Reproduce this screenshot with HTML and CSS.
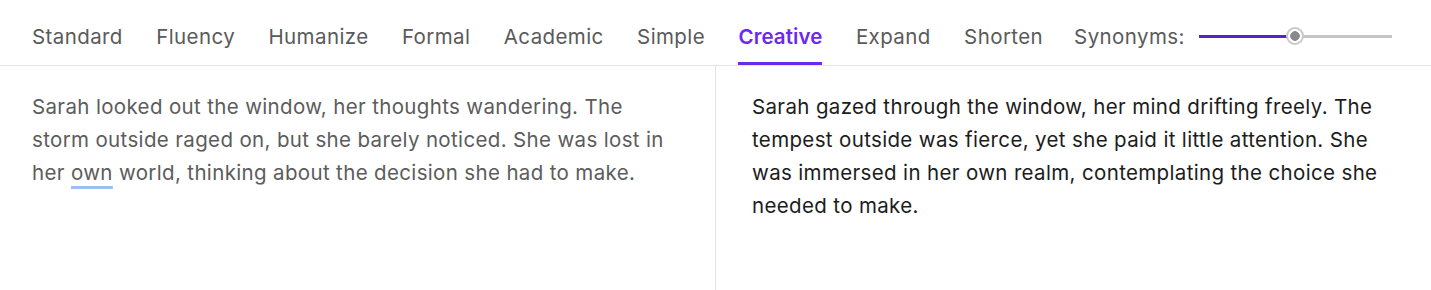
FILE: index.html
```html
<!DOCTYPE html>
<html>
<head>
  <meta charset="UTF-8">
  <meta name="viewport" content="width=device-width, initial-scale=1.0">
  <title>Paraphraser</title>
  <link rel="stylesheet" href="styles.css">
</head>
<body>
  <div class="toolbar">
    <div class="modes">
      <div class="mode">Standard</div>
      <div class="mode">Fluency</div>
      <div class="mode">Humanize</div>
      <div class="mode">Formal</div>
      <div class="mode">Academic</div>
      <div class="mode">Simple</div>
      <div class="mode active">Creative</div>
      <div class="mode">Expand</div>
      <div class="mode">Shorten</div>
    </div>
    <div class="synonyms">
      <span class="synonyms-label">Synonyms:</span>
      <div class="slider">
        <div class="slider-fill" style="width: 50%"></div>
        <div class="slider-thumb"></div>
        <div class="slider-rest"></div>
      </div>
    </div>
  </div>

  <div class="panes">
    <div class="pane input">
      <p>Sarah looked out the window, her thoughts wandering. The storm outside raged on, but she barely noticed. She was lost in her <span class="mark">own</span> world, thinking about the decision she had to make.</p>
    </div>
    <div class="pane output">
      <p>Sarah gazed through the window, her mind drifting freely. The tempest outside was fierce, yet she paid it little attention. She was immersed in her own realm, contemplating the choice she needed to make.</p>
    </div>
  </div>
</body>
</html>
```

FILE: styles.css
```css
body {
  margin: 0;
  font-family: Inter, "Noto Sans", sans-serif;
  background-color: #fff;
  color: #1f1f1f;
}

.toolbar {
  display: flex;
  align-items: stretch;
  height: 65px;
  padding: 0 32px;
  border-bottom: 1px solid #e3e3e3;
}

.modes {
  display: flex;
  gap: 33.4px;
}

.mode {
  display: flex;
  align-items: center;
  padding-top: 10px;
  font-size: 20.5px;
  letter-spacing: 0.4px;
  color: #5a5a5a;
  border-bottom: 3px solid transparent;
  cursor: pointer;
}

.mode.active {
  color: #6d28f0;
  font-weight: 600;
  letter-spacing: 0.1px;
  border-bottom-color: #6d28f0;
}

.synonyms {
  display: flex;
  align-items: center;
  gap: 14px;
  margin-left: 31px;
  padding-top: 10px;
  padding-bottom: 3px;
}

.synonyms-label {
  font-size: 20.5px;
  letter-spacing: 0.4px;
  color: #5a5a5a;
}

.slider {
  display: flex;
  align-items: center;
  width: 193px;
}

.slider-fill {
  height: 3px;
  background-color: #5325c6;
}

.slider-thumb {
  flex: none;
  width: 18px;
  height: 18px;
  margin: 0 -9px;
  box-sizing: border-box;
  border: 2px solid #c9c9c9;
  border-radius: 50%;
  background: radial-gradient(circle, #8a8a8a 0 4.5px, #fff 5px);
  position: relative;
}

.slider-rest {
  flex: 1;
  height: 3px;
  background-color: #c6c6c6;
}

.panes {
  display: flex;
  height: 224px;
}

.pane {
  flex: 1;
  padding: 24px 36px 0 32px;
}

.pane.output {
  padding: 24px 32px 0 36px;
  border-left: 1px solid #e3e3e3;
}

.pane p {
  margin: 0;
  font-size: 20.5px;
  letter-spacing: 0.35px;
  line-height: 33px;
}

.pane.input p {
  color: #5c5c5c;
}

.pane.output p {
  color: #1c1c1c;
}

.mark {
  text-decoration: underline 3px #9dbff7;
  text-underline-offset: 6px;
  text-decoration-skip-ink: none;
}
```
